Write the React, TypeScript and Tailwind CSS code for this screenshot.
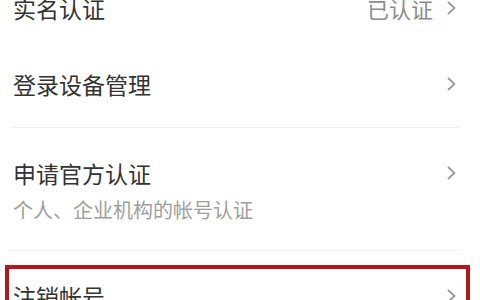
import React from 'react';

const Chevron = () => (
  <svg width="10" height="14" viewBox="0 0 10 14" className="shrink-0">
    <polyline points="1.5,1.5 7.5,7 1.5,12.5" fill="none" stroke="#9a9a9a" strokeWidth="1.8" strokeLinecap="round" strokeLinejoin="round" />
  </svg>
);

const Divider = () => <div className="ml-[10px] w-[450px] h-px bg-[#f0f0f0]" />;

const App = () => {
  return (
    <div
      className="w-[480px] h-[300px] overflow-hidden bg-white text-[#333333]"
      style={{ fontFamily: '"Noto Sans CJK SC", "Noto Sans", sans-serif' }}
    >
      <div className="-mt-[30px]">
        <div className="h-[76px] flex items-center justify-between pl-[13px] pr-[23px]">
          <span className="text-[23px] leading-[30px]">实名认证</span>
          <div className="flex items-center gap-[14px]">
            <span className="text-[22px] leading-[30px] text-[#8c8c8c]">已认证</span>
            <Chevron />
          </div>
        </div>
        <div className="h-[76px] flex items-center justify-between pl-[13px] pr-[23px]">
          <span className="text-[23px] leading-[30px]">登录设备管理</span>
          <Chevron />
        </div>
        <div className="mt-[5px]">
          <Divider />
        </div>
        <div className="pt-[30px] pb-[27px] pl-[13px] pr-[23px]">
          <div className="flex items-center justify-between">
            <span className="text-[23px] leading-[30px]">申请官方认证</span>
            <Chevron />
          </div>
          <p className="mt-[9px] text-[20px] leading-[26px] text-[#9e9e9e]">个人、企业机构的帐号认证</p>
        </div>
        <Divider />
        <div className="mt-[14px] ml-[5px] w-[465px] h-[80px] border-[4px] border-[#b3171c] flex items-start justify-between pt-[12px] pl-[4px] pr-[9px]">
          <span className="text-[23px] leading-[30px]">注销帐号</span>
          <div className="pt-[8px]">
            <Chevron />
          </div>
        </div>
      </div>
    </div>
  );
};

export default App;
